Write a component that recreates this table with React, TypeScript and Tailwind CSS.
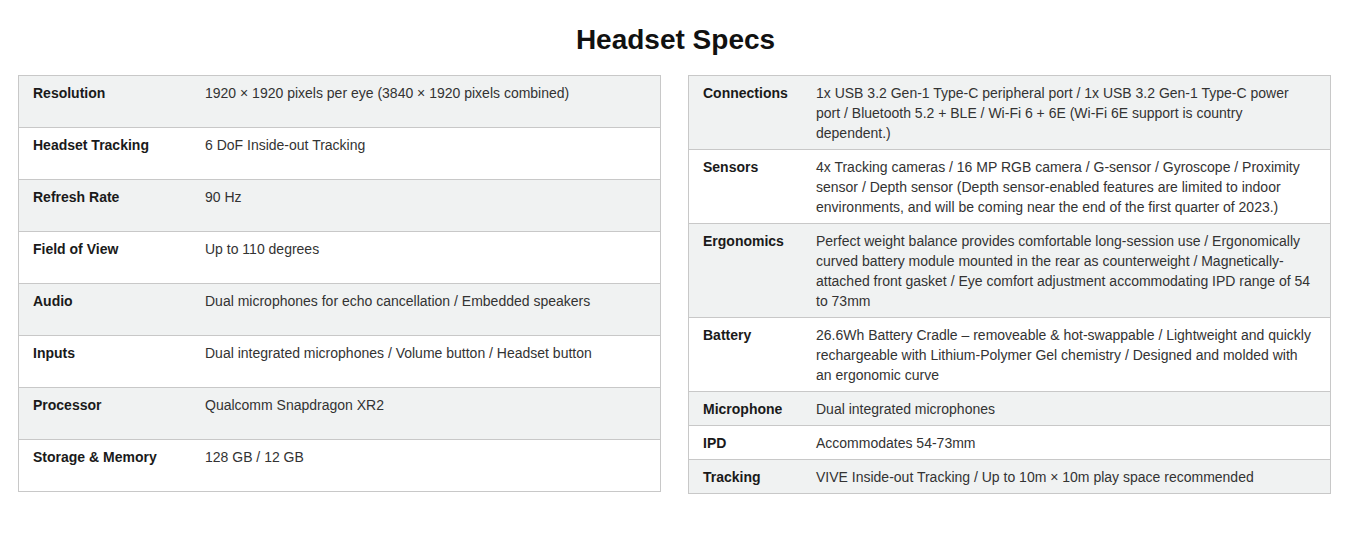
type Spec = {
  label: string;
  value: string;
};

const headset: Spec[] = [
  { label: "Resolution", value: "1920 × 1920 pixels per eye (3840 × 1920 pixels combined)" },
  { label: "Headset Tracking", value: "6 DoF Inside-out Tracking" },
  { label: "Refresh Rate", value: "90 Hz" },
  { label: "Field of View", value: "Up to 110 degrees" },
  { label: "Audio", value: "Dual microphones for echo cancellation / Embedded speakers" },
  { label: "Inputs", value: "Dual integrated microphones / Volume button / Headset button" },
  { label: "Processor", value: "Qualcomm Snapdragon XR2" },
  { label: "Storage & Memory", value: "128 GB / 12 GB" },
];

const more: Spec[] = [
  {
    label: "Connections",
    value:
      "1x USB 3.2 Gen-1 Type-C peripheral port / 1x USB 3.2 Gen-1 Type-C power port / Bluetooth 5.2 + BLE / Wi-Fi 6 + 6E (Wi-Fi 6E support is country dependent.)",
  },
  {
    label: "Sensors",
    value:
      "4x Tracking cameras / 16 MP RGB camera / G-sensor / Gyroscope / Proximity sensor / Depth sensor (Depth sensor-enabled features are limited to indoor environments, and will be coming near the end of the first quarter of 2023.)",
  },
  {
    label: "Ergonomics",
    value:
      "Perfect weight balance provides comfortable long-session use / Ergonomically curved battery module mounted in the rear as counterweight / Magnetically-attached front gasket / Eye comfort adjustment accommodating IPD range of 54 to 73mm",
  },
  {
    label: "Battery",
    value:
      "26.6Wh Battery Cradle – removeable & hot-swappable / Lightweight and quickly rechargeable with Lithium-Polymer Gel chemistry / Designed and molded with an ergonomic curve",
  },
  { label: "Microphone", value: "Dual integrated microphones" },
  { label: "IPD", value: "Accommodates 54-73mm" },
  { label: "Tracking", value: "VIVE Inside-out Tracking / Up to 10m × 10m play space recommended" },
];

const SpecTable = ({ specs, tall, labelWidth }: { specs: Spec[]; tall?: boolean; labelWidth: string }) => {
  return (
    <div className="w-[643px] border border-[#c8c8c8] border-t-0">
      {specs.map((s, i) => (
        <div
          key={s.label}
          className={`flex border-t border-[#c8c8c8] ${i % 2 === 0 ? "bg-[#f0f2f2]" : "bg-white"} ${
            tall ? "h-[52px]" : ""
          }`}
        >
          <div className={`${labelWidth} shrink-0 pl-[14px] pr-[10px] pt-[7px] pb-[6px] font-bold text-[#1a1a1a]`}>
            {s.label}
          </div>
          <div className="flex-1 pl-[14px] pr-[14px] pt-[7px] pb-[6px] text-[#333333]">{s.value}</div>
        </div>
      ))}
    </div>
  );
};

export default function App() {
  return (
    <div className="min-h-[536px] bg-white font-['Liberation_Sans',Arial,sans-serif] text-[14px] leading-[20px]">
      <h2 className="pt-[24px] text-center text-[28px] font-bold leading-[32px] text-[#111111]">Headset Specs</h2>
      <div className="mt-[19px] flex items-start gap-[27px] pl-[18px]">
        <SpecTable specs={headset} tall labelWidth="w-[172px]" />
        <SpecTable specs={more} labelWidth="w-[113px]" />
      </div>
    </div>
  );
}
